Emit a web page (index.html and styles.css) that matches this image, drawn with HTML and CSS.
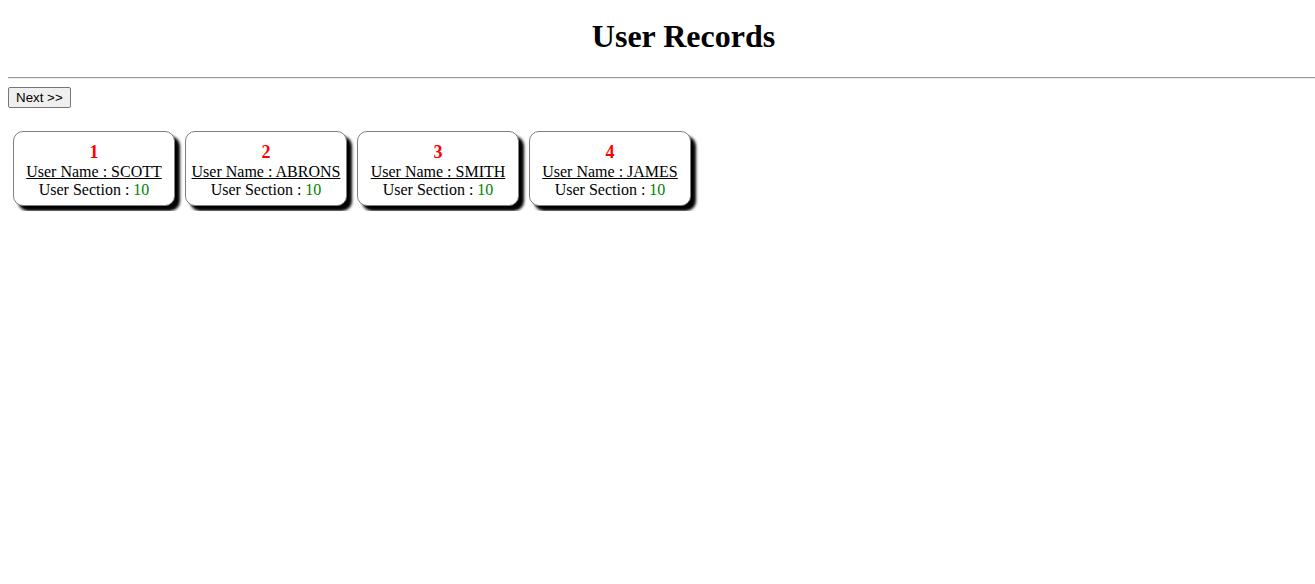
FILE: index.html
```html
<!DOCTYPE html>
<html>
<head>
<meta charset="utf-8">
<title>User Records</title>
<link rel="stylesheet" href="styles.css">
</head>
<body>
<h1 class="title">User Records</h1>
<hr class="rule">
<button class="next-btn" type="button">Next &gt;&gt;</button>
<div class="cards">
  <div class="card">
    <div class="card-num">1</div>
    <div class="card-name">User Name : SCOTT</div>
    <div class="card-section">User Section : <span class="sec-val">10</span></div>
  </div>
  <div class="card">
    <div class="card-num">2</div>
    <div class="card-name">User Name : ABRONS</div>
    <div class="card-section">User Section : <span class="sec-val">10</span></div>
  </div>
  <div class="card">
    <div class="card-num">3</div>
    <div class="card-name">User Name : SMITH</div>
    <div class="card-section">User Section : <span class="sec-val">10</span></div>
  </div>
  <div class="card">
    <div class="card-num">4</div>
    <div class="card-name">User Name : JAMES</div>
    <div class="card-section">User Section : <span class="sec-val">10</span></div>
  </div>
</div>
</body>
</html>
```
FILE: styles.css
```css
html {
  overflow: hidden;
}

body {
  margin: 8px;
  width: 1351px;
  font-family: "Liberation Serif", "Times New Roman", serif;
  font-size: 16px;
  color: #000;
  background: #fff;
}

.title {
  font-size: 32px;
  font-weight: bold;
  text-align: center;
  margin: 10px 0 22px;
}

.rule {
  margin: 8px 0;
  border: none;
  border-top: 1px solid #9a9a9a;
  border-bottom: 1px solid #eeeeee;
  height: 0;
}

.next-btn {
  display: block;
  font-family: "Liberation Sans", Arial, sans-serif;
  font-size: 13.333px;
  padding: 2px 7px;
  border: 1px solid #767676;
  border-radius: 2px;
  background: #efefef;
  color: #000;
  margin: 0;
}

.cards {
  display: flex;
  gap: 10px;
  padding: 5px;
  margin-top: 18px;
  align-items: flex-start;
}

.card {
  width: 150px;
  padding: 9px 5px 6px;
  border: 1px solid #808080;
  border-radius: 10px;
  box-shadow: 5px 5px 3px #000;
  text-align: center;
  background: #fff;
  white-space: nowrap;
}

.card-num {
  color: #ff0000;
  font-weight: bold;
  font-size: 18px;
  line-height: 22px;
}

.card-name {
  text-decoration: underline;
}

.sec-val {
  color: #008000;
}
```
